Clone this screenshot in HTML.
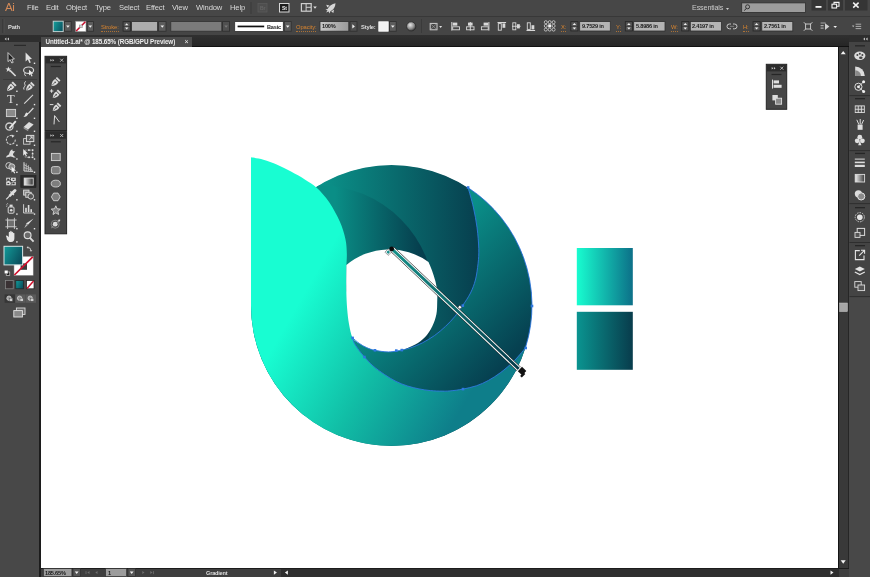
<!DOCTYPE html>
<html>
<head>
<meta charset="utf-8">
<title>Untitled-1.ai</title>
<style>
html,body{margin:0;padding:0;}
body{width:870px;height:577px;overflow:hidden;background:#464646;font-family:"Liberation Sans",sans-serif;position:relative;}
.abs{position:absolute;}
.mi,.lbl,.olbl,.ft,.tx,#tab{will-change:transform;}
#menubar{left:0;top:0;width:870px;height:16px;background:#474747;}
#ctrlbar{left:0;top:16px;width:870px;height:18.5px;background:#454545;border-top:1px solid #383838;box-sizing:border-box;}
#tabbar{left:0;top:34.5px;width:870px;height:12.5px;background:linear-gradient(#303030,#262626);border-bottom:1px solid #111;box-sizing:border-box;}
#tab{left:41px;top:36.5px;width:151px;height:10px;background:#4c4c4c;color:#ececec;font-size:6.3px;font-weight:bold;line-height:10.5px;white-space:nowrap;}
#canvas{left:41px;top:47px;width:797px;height:520.5px;background:#ffffff;}
#tools{left:0;top:42px;width:41px;height:535px;background:#484848;border-right:2px solid #1c1c1c;box-sizing:border-box;}
#vscroll{left:838px;top:47px;width:11px;height:520.5px;background:#393939;border-left:1.6px solid #141414;border-right:1.8px solid #262626;box-sizing:border-box;}
#rightpanel{left:849px;top:42px;width:21px;height:535px;background:#484848;}
#statusbar{left:41px;top:567.5px;width:808px;height:9.5px;background:#3e3e3e;border-top:1px solid #1c1c1c;box-sizing:border-box;}
#hscroll{left:281px;top:568.5px;width:557.5px;height:8.5px;background:#2f2f2f;}
.mi{position:absolute;top:2.5px;color:#dadada;font-size:7.6px;line-height:10px;white-space:nowrap;letter-spacing:-0.15px;}
.lbl{position:absolute;color:#dedede;font-size:5.8px;line-height:8px;white-space:nowrap;font-weight:bold;letter-spacing:-0.2px;}
.olbl{position:absolute;color:#d9852f;font-size:5.8px;line-height:8px;white-space:nowrap;border-bottom:0.5px dotted rgba(217,133,47,0.7);letter-spacing:-0.1px;}
.ft{position:absolute;color:#1a1a1a;font-size:5.6px;line-height:8px;white-space:nowrap;font-weight:bold;letter-spacing:-0.2px;}
</style>
</head>
<body>
<div id="menubar" class="abs"></div>
<div id="ctrlbar" class="abs"></div>
<div id="tabbar" class="abs"></div>
<div id="tab" class="abs"><span style="position:absolute;left:4.5px;letter-spacing:-0.1px;">Untitled-1.ai* @ 185.65% (RGB/GPU Preview)</span><span style="position:absolute;left:143.5px;font-weight:normal;font-size:7px;">×</span></div>
<div id="canvas" class="abs"></div>
<div id="tools" class="abs"></div>
<div id="vscroll" class="abs"></div>
<div id="rightpanel" class="abs"></div>
<div id="statusbar" class="abs"></div>
<div id="hscroll" class="abs"></div>

<!-- ICONS -->
<svg class="abs" style="left:0;top:0;" width="870" height="577" viewBox="0 0 870 577">
<rect x="250.5" y="2" width="1" height="12" fill="#3a3a3a"/>
<rect x="258" y="3.5" width="9" height="8.5" fill="#4e4e4e" stroke="#5a5a5a" stroke-width="0.8"/>
<rect x="279.5" y="3.5" width="9.5" height="8.5" fill="#1e1e1e" stroke="#d8d8d8" stroke-width="1"/>
<rect x="300.8" y="3" width="11" height="8.8" fill="#cfcfcf"/>
<rect x="302" y="4.2" width="3.6" height="6.4" fill="#4a4a4a"/><rect x="306.6" y="4.2" width="4" height="2.6" fill="#4a4a4a"/><rect x="306.6" y="7.8" width="4" height="2.8" fill="#4a4a4a"/>
<path d="M313.2,6.5 h3.6 l-1.8,2.2 z" fill="#e0e0e0"/>
<path d="M335.5,3.2 C332,3.6 329,6 327.6,9 L325.5,9.4 L327.5,10.6 L326,12.6 L328.6,11.6 L329.6,13.4 L330.4,11.2 C333.2,10 335.4,7 335.5,3.2 Z" fill="#d6d6d6"/>
<path d="M326.2,4.8 L329.6,5.4 L327.4,7.6 Z M334,9.6 L333.4,13 L331.2,11.4 Z" fill="#d6d6d6"/>
<path d="M726.0,8.0 h3 l-1.5,2 z" fill="#cfcfcf"/>
<rect x="741.7" y="2.9" width="63.8" height="9.5" fill="#9c9c9c" stroke="#2f2f2f" stroke-width="0.8"/>
<circle cx="747.6" cy="6.8" r="2" fill="none" stroke="#2a2a2a" stroke-width="0.9"/><line x1="746.2" y1="8.4" x2="744.4" y2="10.6" stroke="#2a2a2a" stroke-width="1"/>
<rect x="811.5" y="0" width="14.5" height="10.5" fill="#353535"/><rect x="828" y="0" width="15" height="10.5" fill="#353535"/><rect x="845" y="0" width="22.5" height="10.5" fill="#353535"/>
<rect x="815.5" y="6" width="6" height="1.8" fill="#f4f4f4"/>
<rect x="832" y="4.2" width="4.6" height="3.8" fill="none" stroke="#f4f4f4" stroke-width="1.1"/><path d="M834,4 V2.4 H839 V6.2 H837" fill="none" stroke="#f4f4f4" stroke-width="1.1"/>
<path d="M853.2,2.6 L858.6,7.6 M858.6,2.6 L853.2,7.6" stroke="#f4f4f4" stroke-width="1.5"/>
<rect x="2.6" y="19" width="1" height="14" fill="#2f2f2f"/><rect x="3.6" y="19" width="0.6" height="14" fill="#5a5a5a"/>
<defs><linearGradient id="gsw" x1="0" y1="0" x2="1" y2="0.4"><stop offset="0" stop-color="#17a39f"/><stop offset="1" stop-color="#0b5a66"/></linearGradient></defs>
<rect x="53.2" y="21.2" width="10" height="10.4" fill="url(#gsw)" stroke="#c8d8d8" stroke-width="0.9"/>
<rect x="64.6" y="21.6" width="6.6" height="9.6" fill="#5c5c5c" stroke="#2e2e2e" stroke-width="0.8"/><path d="M66.1,25.6 h3.6 l-1.8,2.2 z" fill="#f0f0f0"/>
<rect x="75.6" y="21.2" width="10.4" height="10.4" fill="#ffffff" stroke="#888" stroke-width="0.6"/><line x1="76.2" y1="31" x2="85.4" y2="21.8" stroke="#c8102e" stroke-width="1.6"/><rect x="79.4" y="25" width="2.8" height="2.8" fill="#d0d0d0" stroke="#777" stroke-width="0.4"/>
<rect x="87.2" y="21.6" width="6.2" height="9.6" fill="#5c5c5c" stroke="#2e2e2e" stroke-width="0.8"/><path d="M88.5,25.6 h3.6 l-1.8,2.2 z" fill="#f0f0f0"/>
<rect x="123" y="21.6" width="7.4" height="9.6" fill="#333" stroke="#2a2a2a" stroke-width="0.8"/><rect x="123.6" y="22.200000000000003" width="6.2" height="3.9" fill="#565656"/><rect x="123.6" y="26.7" width="6.2" height="3.9" fill="#565656"/><path d="M125.0,25.2 h3.4 l-1.7,-2 z" fill="#f0f0f0"/><path d="M125.0,27.6 h3.4 l-1.7,2 z" fill="#f0f0f0"/>
<rect x="131.6" y="21.6" width="26" height="9.6" fill="#adadad" stroke="#2e2e2e" stroke-width="0.8"/>
<rect x="158.6" y="21.6" width="7.4" height="9.6" fill="#5c5c5c" stroke="#2e2e2e" stroke-width="0.8"/><path d="M160.5,25.6 h3.6 l-1.8,2.2 z" fill="#f0f0f0"/>
<rect x="170.8" y="21.6" width="51" height="9.6" fill="#7b7b7b" stroke="#333" stroke-width="0.8"/>
<rect x="222.6" y="21.6" width="7" height="9.6" fill="#505050" stroke="#2e2e2e" stroke-width="0.8"/><path d="M224.3,25.6 h3.6 l-1.8,2.2 z" fill="#7a7a7a"/>
<rect x="234.7" y="21.6" width="48.6" height="9.8" fill="#ffffff" stroke="#2e2e2e" stroke-width="0.8"/><rect x="237.6" y="25.6" width="26.6" height="1.7" fill="#111"/>
<rect x="284.2" y="21.6" width="7" height="9.6" fill="#5c5c5c" stroke="#2e2e2e" stroke-width="0.8"/><path d="M285.9,25.6 h3.6 l-1.8,2.2 z" fill="#f0f0f0"/>
<defs><linearGradient id="gop" x1="0" y1="0" x2="1" y2="0"><stop offset="0" stop-color="#c6c6c6"/><stop offset="1" stop-color="#9a9a9a"/></linearGradient></defs>
<rect x="320" y="21.6" width="28.8" height="9.6" fill="url(#gop)" stroke="#2e2e2e" stroke-width="0.8"/>
<rect x="350" y="21.6" width="7" height="9.6" fill="#4e4e4e" stroke="#2e2e2e" stroke-width="0.8"/><path d="M352.3,24.3 v4.2 l2.6,-2.1 z" fill="#f0f0f0"/>
<rect x="378.8" y="21.8" width="9.4" height="9.4" fill="#f2f2f2" stroke="#fff" stroke-width="0.8"/>
<rect x="389.4" y="21.6" width="6.8" height="9.6" fill="#5c5c5c" stroke="#2e2e2e" stroke-width="0.8"/><path d="M391.0,25.6 h3.6 l-1.8,2.2 z" fill="#f0f0f0"/>
<defs><radialGradient id="gsp" cx="0.4" cy="0.35" r="0.7"><stop offset="0" stop-color="#e8e8e8"/><stop offset="0.6" stop-color="#8a8a8a"/><stop offset="1" stop-color="#2a2a2a"/></radialGradient></defs>
<circle cx="411.2" cy="26.4" r="4.6" fill="url(#gsp)" stroke="#2c2c2c" stroke-width="0.8"/>
<rect x="421" y="19" width="0.8" height="14" fill="#383838"/>
<rect x="430.2" y="23.4" width="6.8" height="6.4" fill="none" stroke="#cfcfcf" stroke-width="1"/><path d="M430.6,23.8 L436.6,29.4 M436.6,23.8 L430.6,29.4" stroke="#9a9a9a" stroke-width="0.7"/><path d="M439.1,26.1 h3 l-1.5,1.8 z" fill="#e0e0e0"/>
<rect x="451.3" y="22" width="1" height="8.6" fill="#d8d8d8"/><rect x="452.7" y="22.6" width="4.6" height="3" fill="#d8d8d8"/><rect x="452.7" y="26.8" width="6.8" height="3" fill="none" stroke="#d8d8d8" stroke-width="0.9"/>
<rect x="469.8" y="22" width="1" height="8.6" fill="#d8d8d8"/><rect x="468" y="22.6" width="4.6" height="3" fill="#d8d8d8"/><rect x="466.6" y="26.8" width="7.4" height="3" fill="none" stroke="#d8d8d8" stroke-width="0.9"/>
<rect x="488.4" y="22" width="1" height="8.6" fill="#d8d8d8"/><rect x="483.6" y="22.6" width="4.6" height="3" fill="#d8d8d8"/><rect x="481.4" y="26.8" width="6.8" height="3" fill="none" stroke="#d8d8d8" stroke-width="0.9"/>
<rect x="497.5" y="22" width="8.6" height="1" fill="#d8d8d8"/><rect x="498.3" y="23.6" width="3" height="6.6" fill="none" stroke="#d8d8d8" stroke-width="0.9"/><rect x="502.5" y="23.4" width="2.8" height="4.4" fill="#d8d8d8"/>
<rect x="512" y="25.8" width="8.6" height="0.9" fill="#d8d8d8"/><rect x="512.8" y="22.8" width="3" height="7" fill="none" stroke="#d8d8d8" stroke-width="0.9"/><rect x="517" y="24.2" width="2.8" height="4.2" fill="#d8d8d8"/>
<rect x="526.5" y="30" width="8.6" height="1" fill="#d8d8d8"/><rect x="527.3" y="22.8" width="3" height="6.6" fill="none" stroke="#d8d8d8" stroke-width="0.9"/><rect x="531.5" y="25.2" width="2.8" height="4.2" fill="#d8d8d8"/>
<circle cx="545.8" cy="22.2" r="1.5" fill="#3a3a3a" stroke="#d8d8d8" stroke-width="0.8"/>
<circle cx="545.8" cy="25.9" r="1.5" fill="#3a3a3a" stroke="#d8d8d8" stroke-width="0.8"/>
<circle cx="545.8" cy="29.6" r="1.5" fill="#3a3a3a" stroke="#d8d8d8" stroke-width="0.8"/>
<circle cx="549.7" cy="22.2" r="1.5" fill="#3a3a3a" stroke="#d8d8d8" stroke-width="0.8"/>
<rect x="548.2" y="24.4" width="3" height="3" fill="#f4f4f4"/>
<circle cx="549.7" cy="29.6" r="1.5" fill="#3a3a3a" stroke="#d8d8d8" stroke-width="0.8"/>
<circle cx="553.6" cy="22.2" r="1.5" fill="#3a3a3a" stroke="#d8d8d8" stroke-width="0.8"/>
<circle cx="553.6" cy="25.9" r="1.5" fill="#3a3a3a" stroke="#d8d8d8" stroke-width="0.8"/>
<circle cx="553.6" cy="29.6" r="1.5" fill="#3a3a3a" stroke="#d8d8d8" stroke-width="0.8"/>
<rect x="570.8" y="21.6" width="7.2" height="9.4" fill="#333" stroke="#2a2a2a" stroke-width="0.8"/><rect x="571.4" y="22.200000000000003" width="6.0" height="3.8" fill="#565656"/><rect x="571.4" y="26.6" width="6.0" height="3.8" fill="#565656"/><path d="M572.7,25.1 h3.4 l-1.7,-2 z" fill="#f0f0f0"/><path d="M572.7,27.5 h3.4 l-1.7,2 z" fill="#f0f0f0"/>
<rect x="579.7" y="21.6" width="30.6" height="9.4" fill="#b4b4b4" stroke="#2e2e2e" stroke-width="0.8"/>
<rect x="625.3" y="21.6" width="7.2" height="9.4" fill="#333" stroke="#2a2a2a" stroke-width="0.8"/><rect x="625.9" y="22.200000000000003" width="6.0" height="3.8" fill="#565656"/><rect x="625.9" y="26.6" width="6.0" height="3.8" fill="#565656"/><path d="M627.2,25.1 h3.4 l-1.7,-2 z" fill="#f0f0f0"/><path d="M627.2,27.5 h3.4 l-1.7,2 z" fill="#f0f0f0"/>
<rect x="633.7" y="21.6" width="31.3" height="9.4" fill="#b4b4b4" stroke="#2e2e2e" stroke-width="0.8"/>
<rect x="681.7" y="21.6" width="7.2" height="9.4" fill="#333" stroke="#2a2a2a" stroke-width="0.8"/><rect x="682.3000000000001" y="22.200000000000003" width="6.0" height="3.8" fill="#565656"/><rect x="682.3000000000001" y="26.6" width="6.0" height="3.8" fill="#565656"/><path d="M683.6,25.1 h3.4 l-1.7,-2 z" fill="#f0f0f0"/><path d="M683.6,27.5 h3.4 l-1.7,2 z" fill="#f0f0f0"/>
<rect x="690.3" y="21.6" width="31.2" height="9.4" fill="#b4b4b4" stroke="#2e2e2e" stroke-width="0.8"/>
<rect x="753" y="21.6" width="7.2" height="9.4" fill="#333" stroke="#2a2a2a" stroke-width="0.8"/><rect x="753.6" y="22.200000000000003" width="6.0" height="3.8" fill="#565656"/><rect x="753.6" y="26.6" width="6.0" height="3.8" fill="#565656"/><path d="M754.9,25.1 h3.4 l-1.7,-2 z" fill="#f0f0f0"/><path d="M754.9,27.5 h3.4 l-1.7,2 z" fill="#f0f0f0"/>
<rect x="761.8" y="21.6" width="31" height="9.4" fill="#b4b4b4" stroke="#2e2e2e" stroke-width="0.8"/>
<path d="M731,24 h-1.6 a2.4,2.4 0 0 0 0,4.8 h1.6 M733,24 h1.6 a2.4,2.4 0 0 1 0,4.8 h-1.6" fill="none" stroke="#c8c8c8" stroke-width="1"/><path d="M730,26.4 h4" stroke="#8a8a8a" stroke-width="0.8"/>
<rect x="805.6" y="24" width="5" height="5" fill="none" stroke="#cfcfcf" stroke-width="0.9"/><path d="M803.8,22.2 l2,2 M812.4,22.2 l-2,2 M803.8,30.8 l2,-2 M812.4,30.8 l-2,-2" stroke="#cfcfcf" stroke-width="0.9"/>
<path d="M820.6,23 h5 M820.6,25.6 h3 M820.6,28.2 h3" stroke="#a8a8a8" stroke-width="1.2"/><path d="M825,23.2 L829.4,26.6 L825,30 Z" fill="#cfcfcf"/><path d="M833.4,25.9 h3.6 l-1.8,2.2 z" fill="#f0f0f0"/>
<path d="M855.6,24.2 h5.6 M855.6,26.4 h5.6 M855.6,28.6 h5.6" stroke="#b8b8b8" stroke-width="0.9"/><path d="M852.0,25.6 h2.4 l-1.2,1.6 z" fill="#b8b8b8"/>
<rect x="0" y="35.5" width="40" height="6.5" fill="#2e2e2e"/>
<path d="M6.4,37.6 L4.6,39 L6.4,40.4 Z M9,37.6 L7.2,39 L9,40.4 Z" fill="#c8c8c8"/>
<rect x="14" y="44.8" width="12" height="1.2" fill="#2a2a2a"/>
<rect x="3" y="79" width="34" height="0.8" fill="#3a3a3a"/>
<rect x="20.8" y="175.6" width="15.2" height="11.8" fill="#2b2b2b" stroke="#222" stroke-width="0.6"/>
<path d="M8,52.6 L8,61.6 L10.2,59.6 L11.8,63 L13.2,62.4 L11.8,59.2 L14.4,59 Z" fill="#1e1e1e" stroke="#d8d8d8" stroke-width="0.9"/>
<path d="M25.6,52.6 L25.6,61.6 L27.8,59.6 L29.400000000000002,63 L30.8,62.4 L29.400000000000002,59.2 L32.0,59 Z" fill="#e0e0e0"/><rect x="33.8" y="62.6" width="1.4" height="1.4" fill="#e8e8e8"/>
<path d="M10,70.4 L15.6,76.0" stroke="#d8d8d8" stroke-width="1.6"/><path d="M8.4,66.4 l0.8,2 l2.2,0.2 l-1.8,1.2 l0.6,2.2 l-1.8,-1.4 l-1.8,1.4 l0.6,-2.2 l-1.8,-1.2 l2.2,-0.2 z" fill="#e0e0e0"/>
<ellipse cx="28.6" cy="70.2" rx="5" ry="3.2" fill="none" stroke="#d8d8d8" stroke-width="1.2"/><path d="M25.200000000000003,72.4 q-1.6,2 0.6,3.8" fill="none" stroke="#d8d8d8" stroke-width="1"/><path d="M29.0,69.80000000000001 l0,5.8 l1.4,-1.4 l1.2,2.4 l1,-0.6 l-1.2,-2.2 l2,-0.2 z" fill="#e8e8e8"/>
<g transform="translate(11.6,86.4) scale(1.0) rotate(225)"><path d="M0,-6.4 C2.6,-3.6 3.2,-1 2.4,1.6 L-2.4,1.6 C-3.2,-1 -2.6,-3.6 0,-6.4 Z" fill="#dcdcdc"/><path d="M0,-5.6 L0,-1.6" stroke="#3a3a3a" stroke-width="0.7"/><circle cx="0" cy="-1" r="0.8" fill="#3a3a3a"/><rect x="-2.6" y="2.4" width="5.2" height="2" fill="#dcdcdc"/></g><rect x="16.2" y="90.6" width="1.4" height="1.4" fill="#e8e8e8"/>
<g transform="translate(30.200000000000003,86.4) scale(0.92) rotate(225)"><path d="M0,-6.4 C2.6,-3.6 3.2,-1 2.4,1.6 L-2.4,1.6 C-3.2,-1 -2.6,-3.6 0,-6.4 Z" fill="#dcdcdc"/><path d="M0,-5.6 L0,-1.6" stroke="#3a3a3a" stroke-width="0.7"/><circle cx="0" cy="-1" r="0.8" fill="#3a3a3a"/><rect x="-2.6" y="2.4" width="5.2" height="2" fill="#dcdcdc"/></g><path d="M24.0,89.6 c-1.6,-2.6 2.4,-3 0.8,-5.4 c-0.8,-1.4 0.2,-2.4 1.2,-2.8" fill="none" stroke="#d8d8d8" stroke-width="1"/>
<path d="M33.0,94.89999999999999 L24.200000000000003,103.7" stroke="#d8d8d8" stroke-width="1.1"/><rect x="33.8" y="103.9" width="1.4" height="1.4" fill="#e8e8e8"/>
<rect x="16.2" y="103.9" width="1.4" height="1.4" fill="#e8e8e8"/>
<rect x="6.4" y="109.4" width="9.2" height="7.2" fill="#8a8a8a" stroke="#d4d4d4" stroke-width="0.9"/><rect x="16.2" y="117.6" width="1.4" height="1.4" fill="#e8e8e8"/>
<path d="M33.4,108 L28.200000000000003,113.6" stroke="#d8d8d8" stroke-width="1.3"/><path d="M28.400000000000002,113.2 c-0.6,2.8 -2.6,3.8 -5,3.8 c1.6,-0.8 1.4,-3 2.8,-4.4 z" fill="#e0e0e0"/><rect x="33.8" y="117.6" width="1.4" height="1.4" fill="#e8e8e8"/>
<circle cx="9.4" cy="126.6" r="3.6" fill="none" stroke="#cfcfcf" stroke-width="1.3"/><path d="M15.8,121.2 L9.4,128.4" stroke="#e8e8e8" stroke-width="1.8"/><rect x="16.2" y="130.6" width="1.4" height="1.4" fill="#e8e8e8"/>
<path d="M23.6,127 l5.4,-5 l4.6,2.4 l-5.4,5.2 z" fill="#dcdcdc"/><path d="M23.6,127 l4.6,2.6 l0,1.6 l-4.6,-2.6 z" fill="#9a9a9a"/><rect x="33.8" y="130.6" width="1.4" height="1.4" fill="#e8e8e8"/>
<path d="M15.2,139.6 a4.4,4.4 0 1 1 -2.4,-3.6" fill="none" stroke="#cfcfcf" stroke-width="1.1" stroke-dasharray="2.2,1"/><path d="M11.6,134.4 l3,1.4 l-2.4,2 z" fill="#d8d8d8"/><rect x="16.2" y="144.6" width="1.4" height="1.4" fill="#e8e8e8"/>
<rect x="23.6" y="138.6" width="6.4" height="5.6" fill="none" stroke="#cfcfcf" stroke-width="0.9"/><rect x="26.400000000000002" y="135.4" width="7.4" height="6.2" fill="#5a5a5a" stroke="#dcdcdc" stroke-width="1"/><path d="M29.200000000000003,139.6 l3,-2.8 m0,2 l0,-2 l-2,0" stroke="#e8e8e8" stroke-width="0.8" fill="none"/><rect x="33.8" y="144.6" width="1.4" height="1.4" fill="#e8e8e8"/>
<path d="M6,157.5 c1.2,-3.4 2.4,-1 3.4,-4.4 c0.6,-2.4 1.8,-3.4 3,-3.8 c-0.4,2 1.2,2.4 2.8,1.6 c-0.8,1.8 -2.4,2 -2.2,3.8 c0.2,1.4 1.8,1.6 2.8,2.6 c-2,0.8 -3.6,-0.6 -5,-0.8 c-1.6,-0.2 -2.6,1 -4.8,1 z" fill="#dcdcdc"/><rect x="16.2" y="158.3" width="1.4" height="1.4" fill="#e8e8e8"/>
<rect x="25.200000000000003" y="150.1" width="7.4" height="7.2" fill="none" stroke="#bdbdbd" stroke-width="0.8" stroke-dasharray="1.4,1"/><path d="M23.200000000000003,149.1 l0,6.6 l1.6,-1.6 l1.2,2.4 l1,-0.5 l-1.2,-2.3 l2.2,-0.2 z" fill="#e8e8e8"/><rect x="31.8" y="149.29999999999998" width="1.6" height="1.6" fill="#e8e8e8"/><rect x="31.8" y="156.49999999999997" width="1.6" height="1.6" fill="#e8e8e8"/><rect x="31.8" y="152.89999999999998" width="1.6" height="1.6" fill="#e8e8e8"/><rect x="28.2" y="156.49999999999997" width="1.6" height="1.6" fill="#e8e8e8"/><rect x="28.2" y="149.29999999999998" width="1.6" height="1.6" fill="#e8e8e8"/><rect x="33.8" y="158.3" width="1.4" height="1.4" fill="#e8e8e8"/>
<circle cx="8.8" cy="165.6" r="3" fill="none" stroke="#cfcfcf" stroke-width="1"/><circle cx="11.8" cy="166.8" r="3" fill="#8a8a8a" stroke="#cfcfcf" stroke-width="1"/><path d="M11.6,166.8 l0,5.8 l1.4,-1.4 l1.2,2.2 l1,-0.5 l-1.2,-2.2 l2,-0.2 z" fill="#f0f0f0"/><rect x="16.2" y="171.6" width="1.4" height="1.4" fill="#e8e8e8"/>
<path d="M24.0,162.2 L24.0,171 L33.2,171.4" fill="none" stroke="#dcdcdc" stroke-width="1"/><path d="M26.200000000000003,163.4 V171 M28.400000000000002,165.2 V171 M30.6,167 V171.2 M24.0,164.6 L32.2,169.6 M24.0,167.6 L32.6,170.4" stroke="#c8c8c8" stroke-width="0.8" fill="none"/><rect x="33.8" y="171.6" width="1.4" height="1.4" fill="#e8e8e8"/>
<rect x="6.2" y="177.7" width="9.6" height="7.6" fill="#dcdcdc"/><path d="M6.2,181.1 q2.4,-1.4 4.8,0.2 t4.8,0 M10.8,177.7 q-1.2,2 0,3.8 t0,3.8" stroke="#2e2e2e" stroke-width="0.9" fill="none"/><rect x="7.2" y="178.7" width="2" height="1.4" fill="#3a3a3a"/><rect x="12.4" y="182.9" width="2.2" height="1.4" fill="#3a3a3a"/><rect x="12.6" y="178.7" width="1.8" height="1.2" fill="#3a3a3a"/><rect x="7.4" y="182.9" width="1.8" height="1.2" fill="#3a3a3a"/>
<defs><linearGradient id="ggt" x1="0" y1="0" x2="1" y2="0"><stop offset="0" stop-color="#f4f4f4"/><stop offset="1" stop-color="#2a2a2a"/></linearGradient></defs><rect x="24.200000000000003" y="178.1" width="9" height="7" fill="url(#ggt)" stroke="#e0e0e0" stroke-width="0.9"/>
<path d="M6.2,199.3 L10.4,195.1" stroke="#e0e0e0" stroke-width="1.2"/><path d="M9.4,196.1 L12.8,192.7" stroke="#e0e0e0" stroke-width="2.6"/><path d="M10.4,191.5 L14,195.1" stroke="#e0e0e0" stroke-width="1.2"/><path d="M12.6,192.9 L15,190.5" stroke="#e0e0e0" stroke-width="3" stroke-linecap="round"/><rect x="16.2" y="199.1" width="1.4" height="1.4" fill="#e8e8e8"/>
<rect x="23.6" y="190.1" width="5.4" height="5" fill="#8a8a8a" stroke="#dcdcdc" stroke-width="0.9"/><rect x="25.8" y="192.3" width="5.4" height="5" fill="#6a6a6a" stroke="#dcdcdc" stroke-width="0.9"/><circle cx="30.8" cy="196.3" r="2.8" fill="#555" stroke="#dcdcdc" stroke-width="0.9"/><rect x="33.8" y="199.1" width="1.4" height="1.4" fill="#e8e8e8"/>
<rect x="8.2" y="207.0" width="5.8" height="6.2" rx="1" fill="none" stroke="#dcdcdc" stroke-width="1"/><rect x="9.6" y="204.60000000000002" width="3" height="2.2" fill="#dcdcdc"/><circle cx="11.2" cy="210.20000000000002" r="1.3" fill="#dcdcdc"/><path d="M6.4,204.4 l1,0.6 M6,206.20000000000002 l1.2,0 M7.4,203.20000000000002 l0.6,1" stroke="#dcdcdc" stroke-width="0.7"/><rect x="16.2" y="213.4" width="1.4" height="1.4" fill="#e8e8e8"/>
<path d="M23.6,204.20000000000002 V213.0 H33.800000000000004" fill="none" stroke="#dcdcdc" stroke-width="0.9"/><rect x="25.200000000000003" y="207.8" width="1.6" height="4.4" fill="#dcdcdc"/><rect x="27.8" y="205.0" width="1.6" height="7.2" fill="#dcdcdc"/><rect x="30.400000000000002" y="209.20000000000002" width="1.6" height="3" fill="#dcdcdc"/><rect x="33.8" y="213.4" width="1.4" height="1.4" fill="#e8e8e8"/>
<rect x="7.6" y="220.0" width="6.8" height="6.8" fill="#6e6e6e" stroke="#dcdcdc" stroke-width="0.9"/><path d="M5.4,220.0 h2 M14.6,220.0 h2 M5.4,226.8 h2 M14.6,226.8 h2 M7.6,217.8 v2 M14.4,217.8 v2 M7.6,227.0 v2 M14.4,227.0 v2" stroke="#dcdcdc" stroke-width="0.8"/><rect x="16.2" y="228.0" width="1.4" height="1.4" fill="#e8e8e8"/>
<path d="M33.6,218.4 L28.0,224.8 L26.0,223.6 Z" fill="#e0e0e0"/><path d="M26.200000000000003,224.0 l1.6,1 l-3.6,3.2 z" fill="#bdbdbd"/><rect x="33.8" y="228.0" width="1.4" height="1.4" fill="#e8e8e8"/>
<path d="M6.4,237.0 c-1,-1.4 0.4,-2.2 1.4,-1 l1,1.2 v-4.8 c0,-1 1.4,-1 1.4,0 v-1 c0,-1 1.4,-1 1.4,0 v1 c0,-1 1.4,-1 1.4,0 v1.2 c0,-1 1.4,-1 1.4,0 v4.6 c0,2 -1,3.8 -3.4,3.8 c-2.2,0 -3,-1 -4,-2.6 z" fill="#e4e4e4"/><rect x="16.2" y="241.2" width="1.4" height="1.4" fill="#e8e8e8"/>
<circle cx="27.6" cy="235.2" r="3.4" fill="#6a6a6a" stroke="#dcdcdc" stroke-width="1.2"/><path d="M30.0,237.79999999999998 L33.6,241.6" stroke="#dcdcdc" stroke-width="1.8"/>
<rect x="14" y="256.4" width="19.2" height="19" fill="#ffffff" stroke="#8a8a8a" stroke-width="0.5"/><rect x="20.6" y="263.4" width="6.4" height="6.4" fill="#3c3c3c"/><path d="M14.4,275 L32.8,256.8" stroke="#d0102c" stroke-width="1.7"/>
<defs><linearGradient id="gfs" x1="0" y1="0" x2="1" y2="0.5"><stop offset="0" stop-color="#139c9a"/><stop offset="1" stop-color="#0a5360"/></linearGradient></defs>
<rect x="4" y="246.3" width="18.6" height="18.6" fill="url(#gfs)" stroke="#d4e4e4" stroke-width="1"/>
<path d="M27.6,247.4 q3.4,0 3.4,3.4" fill="none" stroke="#cfcfcf" stroke-width="0.9"/><path d="M28.2,246 l-1.6,1.4 l1.6,1.4 z M29.6,250.2 l1.4,1.6 l1.4,-1.6 z" fill="#cfcfcf"/>
<rect x="6.2" y="272" width="3.6" height="3.6" fill="#222" stroke="#e8e8e8" stroke-width="0.6"/><rect x="4.4" y="270.2" width="3.6" height="3.6" fill="#ffffff" stroke="#444" stroke-width="0.4"/>
<rect x="5.6" y="280.6" width="7.6" height="8.2" fill="#3a3234" stroke="#8a8a8a" stroke-width="0.7"/>
<rect x="15.8" y="280.6" width="7.6" height="8.2" fill="url(#gfs)" stroke="#222" stroke-width="0.7"/>
<rect x="26.6" y="280.6" width="7.4" height="8.2" fill="#ffffff" stroke="#222" stroke-width="0.7"/><path d="M27,288.4 L33.6,281" stroke="#d0102c" stroke-width="1.5"/>
<rect x="4.6" y="294.4" width="10.4" height="8.4" fill="#363636"/><rect x="15.4" y="294.4" width="10.2" height="8.4" fill="#5a5a5a"/><rect x="26" y="294.4" width="10" height="8.4" fill="#5a5a5a"/>
<circle cx="9.0" cy="298.2" r="2.2" fill="#9a9a9a" stroke="#dcdcdc" stroke-width="0.7"/><rect x="9.4" y="298.2" width="3.2" height="3" fill="#cfcfcf" stroke="#444" stroke-width="0.4"/>
<circle cx="19.599999999999998" cy="298.2" r="2.2" fill="#9a9a9a" stroke="#dcdcdc" stroke-width="0.7"/><rect x="20.0" y="298.2" width="3.2" height="3" fill="#cfcfcf" stroke="#444" stroke-width="0.4"/>
<circle cx="30.2" cy="298.2" r="2.2" fill="#9a9a9a" stroke="#dcdcdc" stroke-width="0.7"/><rect x="30.6" y="298.2" width="3.2" height="3" fill="#cfcfcf" stroke="#444" stroke-width="0.4"/>
<rect x="16.4" y="308" width="8.6" height="6.4" fill="#6a6a6a" stroke="#dcdcdc" stroke-width="0.9"/><rect x="13.8" y="310.6" width="8.6" height="6.4" fill="#8a8a8a" stroke="#e4e4e4" stroke-width="0.9"/>
<rect x="45" y="56.3" width="21.6" height="74.2" fill="#464646" stroke="#262626" stroke-width="1"/><rect x="45.5" y="56.8" width="20.6" height="6.6" fill="#2c2c2c"/><path d="M50.4,58.9 l1.6,1.3 l-1.6,1.3 z M52.6,58.9 l1.6,1.3 l-1.6,1.3 z" fill="#cfcfcf"/><path d="M60.199999999999996,58.699999999999996 l3,3 m0,-3 l-3,3" stroke="#cfcfcf" stroke-width="0.8"/><rect x="50.8" y="65.89999999999999" width="10" height="1.2" fill="#262626"/>
<g transform="translate(55.8,81.6) scale(0.95) rotate(225)"><path d="M0,-6.4 C2.6,-3.6 3.2,-1 2.4,1.6 L-2.4,1.6 C-3.2,-1 -2.6,-3.6 0,-6.4 Z" fill="#dcdcdc"/><path d="M0,-5.6 L0,-1.6" stroke="#3a3a3a" stroke-width="0.7"/><circle cx="0" cy="-1" r="0.8" fill="#3a3a3a"/><rect x="-2.6" y="2.4" width="5.2" height="2" fill="#dcdcdc"/></g>
<g transform="translate(56.8,94) scale(0.9) rotate(225)"><path d="M0,-6.4 C2.6,-3.6 3.2,-1 2.4,1.6 L-2.4,1.6 C-3.2,-1 -2.6,-3.6 0,-6.4 Z" fill="#dcdcdc"/><path d="M0,-5.6 L0,-1.6" stroke="#3a3a3a" stroke-width="0.7"/><circle cx="0" cy="-1" r="0.8" fill="#3a3a3a"/><rect x="-2.6" y="2.4" width="5.2" height="2" fill="#dcdcdc"/></g><path d="M49.8,91 h3.6 M51.599999999999994,89.2 v3.6" stroke="#e0e0e0" stroke-width="1"/>
<g transform="translate(56.8,107) scale(0.9) rotate(225)"><path d="M0,-6.4 C2.6,-3.6 3.2,-1 2.4,1.6 L-2.4,1.6 C-3.2,-1 -2.6,-3.6 0,-6.4 Z" fill="#dcdcdc"/><path d="M0,-5.6 L0,-1.6" stroke="#3a3a3a" stroke-width="0.7"/><circle cx="0" cy="-1" r="0.8" fill="#3a3a3a"/><rect x="-2.6" y="2.4" width="5.2" height="2" fill="#dcdcdc"/></g><path d="M49.8,104.6 h3.6" stroke="#e0e0e0" stroke-width="1"/>
<path d="M54.0,124.4 L54.599999999999994,115.6 L59.4,122" fill="none" stroke="#dcdcdc" stroke-width="1"/>
<rect x="45" y="131.6" width="21.6" height="102.2" fill="#464646" stroke="#262626" stroke-width="1"/><rect x="45.5" y="132.1" width="20.6" height="6.6" fill="#2c2c2c"/><path d="M50.4,134.2 l1.6,1.3 l-1.6,1.3 z M52.6,134.2 l1.6,1.3 l-1.6,1.3 z" fill="#cfcfcf"/><path d="M60.199999999999996,134.0 l3,3 m0,-3 l-3,3" stroke="#cfcfcf" stroke-width="0.8"/><rect x="50.8" y="141.2" width="10" height="1.2" fill="#262626"/>
<rect x="51.4" y="153.4" width="8.8" height="7.2" fill="#7e7e7e" stroke="#d4d4d4" stroke-width="0.9"/>
<rect x="51.4" y="166.6" width="8.8" height="7.2" rx="2" fill="#7e7e7e" stroke="#d4d4d4" stroke-width="0.9"/>
<ellipse cx="55.8" cy="183.6" rx="4.6" ry="3.4" fill="#7e7e7e" stroke="#d4d4d4" stroke-width="0.9"/>
<polygon points="60.2,196.9 58.0,200.7 53.6,200.7 51.4,196.9 53.6,193.1 58.0,193.1" fill="#7e7e7e" stroke="#d4d4d4" stroke-width="0.9"/>
<polygon points="55.8,205.8 57.1,208.8 60.4,209.1 57.9,211.3 58.6,214.5 55.8,212.8 53.0,214.5 53.7,211.3 51.2,209.1 54.5,208.8" fill="#7e7e7e" stroke="#d4d4d4" stroke-width="0.9"/>
<circle cx="55.199999999999996" cy="224.2" r="2.4" fill="#dcdcdc"/><circle cx="55.199999999999996" cy="224.2" r="4" fill="none" stroke="#9a9a9a" stroke-width="0.7"/><circle cx="59.199999999999996" cy="220.4" r="1" fill="#e8e8e8"/><path d="M51.199999999999996,228 L60.199999999999996,219.6" stroke="#bdbdbd" stroke-width="0.6"/>
<rect x="766.3" y="64.3" width="20.4" height="45" fill="#464646" stroke="#262626" stroke-width="1"/><rect x="766.8" y="64.8" width="19.4" height="6.6" fill="#2c2c2c"/><path d="M771.6999999999999,66.89999999999999 l1.6,1.3 l-1.6,1.3 z M773.9,66.89999999999999 l1.6,1.3 l-1.6,1.3 z" fill="#cfcfcf"/><path d="M780.3,66.7 l3,3 m0,-3 l-3,3" stroke="#cfcfcf" stroke-width="0.8"/><rect x="771.5" y="73.89999999999999" width="10" height="1.2" fill="#262626"/>
<rect x="772" y="79.6" width="1" height="9" fill="#e0e0e0"/><rect x="773.6" y="80.4" width="5.4" height="3" fill="#e0e0e0"/><rect x="773.6" y="84.8" width="8" height="3" fill="#e0e0e0"/>
<rect x="772.4" y="95" width="5.4" height="5.4" fill="#dcdcdc"/><rect x="775.6" y="98.2" width="6" height="6" fill="#8a8a8a" stroke="#e0e0e0" stroke-width="0.9"/>
<path d="M840.7,54.3 h5 l-2.5,-3.4 z" fill="#f4f4f4"/>
<rect x="839.6" y="303" width="7.8" height="8.6" fill="#a6a6a6" stroke="#c4c4c4" stroke-width="0.5"/>
<path d="M840.7,560.3 h5 l-2.5,3.4 z" fill="#f4f4f4"/>
<rect x="849" y="35.5" width="21" height="6.5" fill="#2e2e2e"/>
<path d="M865,37.6 L863.2,39 L865,40.4 Z M867.6,37.6 L865.8,39 L867.6,40.4 Z" fill="#c8c8c8"/>
<rect x="849.5" y="42" width="20.5" height="254.5" fill="#444444"/>
<rect x="855" y="45.2" width="10" height="1.3" fill="#262626"/>
<rect x="855" y="98" width="10" height="1.3" fill="#262626"/>
<rect x="855" y="152.8" width="10" height="1.3" fill="#262626"/>
<rect x="855" y="207" width="10" height="1.3" fill="#262626"/>
<rect x="855" y="245" width="10" height="1.3" fill="#262626"/>
<rect x="849.5" y="95.2" width="20.5" height="0.9" fill="#2c2c2c"/>
<rect x="849.5" y="150.2" width="20.5" height="0.9" fill="#2c2c2c"/>
<rect x="849.5" y="203.2" width="20.5" height="0.9" fill="#2c2c2c"/>
<rect x="849.5" y="242" width="20.5" height="0.9" fill="#2c2c2c"/>
<rect x="849.5" y="296.2" width="20.5" height="0.9" fill="#2c2c2c"/>
<ellipse cx="859.8" cy="55.8" rx="5.6" ry="4.2" fill="#dcdcdc"/><circle cx="857.4" cy="55" r="1" fill="#444"/><circle cx="859.8" cy="53.8" r="1" fill="#444"/><circle cx="862.4" cy="55" r="1" fill="#444"/><ellipse cx="860.8" cy="57.8" rx="1.8" ry="1.2" fill="#444"/>
<path d="M855.1999999999999,76 V66.4 A9.6,9.6 0 0 1 864.8,76 Z" fill="#dcdcdc"/><path d="M855.1999999999999,76 V70.2 A5.8,5.8 0 0 1 861.0,76 Z" fill="#8a8a8a"/>
<circle cx="858.4" cy="86.8" r="3.6" fill="none" stroke="#dcdcdc" stroke-width="1"/><path d="M858.4,86.8 L863.4,82 M858.4,86.8 L863.4,91.4" stroke="#dcdcdc" stroke-width="0.9"/><circle cx="863.5999999999999" cy="81.8" r="1.5" fill="#f0f0f0"/><circle cx="863.5999999999999" cy="91.6" r="1.5" fill="#f0f0f0"/><circle cx="858.4" cy="86.8" r="1.4" fill="#f0f0f0"/>
<rect x="854.8" y="105.4" width="10" height="7.6" fill="#dcdcdc"/><rect x="855.6" y="106.4" width="2.2" height="2.4" fill="#555"/><rect x="855.6" y="109.7" width="2.2" height="2.4" fill="#555"/><rect x="858.7" y="106.4" width="2.2" height="2.4" fill="#555"/><rect x="858.7" y="109.7" width="2.2" height="2.4" fill="#555"/><rect x="861.8" y="106.4" width="2.2" height="2.4" fill="#555"/><rect x="861.8" y="109.7" width="2.2" height="2.4" fill="#555"/>
<rect x="857.5999999999999" y="124.6" width="5" height="5.2" fill="#dcdcdc"/><path d="M858.8,124.4 l-2,-4.6 M860.1999999999999,124.4 v-5.4 M861.5999999999999,124.4 l2,-4.4" stroke="#dcdcdc" stroke-width="1"/>
<circle cx="859.8" cy="137.2" r="2.4" fill="#e0e0e0"/><circle cx="857.1999999999999" cy="140.8" r="2.4" fill="#e0e0e0"/><circle cx="862.4" cy="140.8" r="2.4" fill="#e0e0e0"/><path d="M859.8,140 l-1.6,5.2 h3.2 z" fill="#e0e0e0"/>
<rect x="854.8" y="158.6" width="10" height="1" fill="#dcdcdc"/><rect x="854.8" y="161.6" width="10" height="1.6" fill="#dcdcdc"/><rect x="854.8" y="164.8" width="10" height="2.2" fill="#dcdcdc"/>
<defs><linearGradient id="grp" x1="0" y1="0" x2="1" y2="0"><stop offset="0" stop-color="#f0f0f0"/><stop offset="1" stop-color="#3a3a3a"/></linearGradient></defs><rect x="855.1999999999999" y="174.4" width="9.4" height="7.6" fill="url(#grp)" stroke="#dcdcdc" stroke-width="0.9"/>
<circle cx="858.4" cy="193.8" r="3.6" fill="#dcdcdc"/><circle cx="861.1999999999999" cy="196.4" r="3.6" fill="#8a8a8a" stroke="#e4e4e4" stroke-width="1"/>
<circle cx="859.8" cy="217.2" r="4.6" fill="none" stroke="#cfcfcf" stroke-width="0.9" stroke-dasharray="1.6,1"/><circle cx="859.8" cy="217.2" r="2.8" fill="#e4e4e4"/>
<rect x="857.1999999999999" y="228.4" width="7.4" height="7" fill="none" stroke="#dcdcdc" stroke-width="1"/><rect x="855.0" y="232.4" width="5" height="5" fill="#555" stroke="#dcdcdc" stroke-width="0.9"/>
<path d="M859.8,250.6 H855.4 V259.6 H864.0 V255.4" fill="none" stroke="#e4e4e4" stroke-width="1.1"/><path d="M859.1999999999999,255.6 L864.1999999999999,250.6 M861.0,250.2 H864.5999999999999 V253.8" fill="none" stroke="#e4e4e4" stroke-width="1.1"/>
<path d="M859.8,266.4 l5,2.6 l-5,2.6 l-5,-2.6 z" fill="#e4e4e4"/><path d="M854.8,272 l5,2.6 l5,-2.6" fill="none" stroke="#e4e4e4" stroke-width="1.1"/>
<rect x="854.8" y="281.6" width="6.4" height="5.6" fill="none" stroke="#dcdcdc" stroke-width="0.9"/><rect x="858.0" y="285" width="6.6" height="5.6" fill="#555" stroke="#dcdcdc" stroke-width="0.9"/>
<rect x="43.5" y="568.6" width="28.4" height="8" fill="#9c9c9c" stroke="#2a2a2a" stroke-width="0.6"/>
<rect x="73" y="568.6" width="7.4" height="8" fill="#555" stroke="#2a2a2a" stroke-width="0.6"/><path d="M74.8,571.6 h3.8 l-1.9,2.4 z" fill="#f0f0f0"/>
<rect x="105.6" y="568.6" width="21" height="8" fill="#9c9c9c" stroke="#2a2a2a" stroke-width="0.6"/>
<rect x="128" y="568.6" width="7.4" height="8" fill="#555" stroke="#2a2a2a" stroke-width="0.6"/><path d="M129.8,571.6 h3.8 l-1.9,2.4 z" fill="#f0f0f0"/>
<path d="M89.5,571.1 v3 l-2.2,-1.5 z" fill="#6e6e6e"/><rect x="85.6" y="571.1" width="0.8" height="3" fill="#6e6e6e"/><path d="M97.5,571.1 v3 l-2.2,-1.5 z" fill="#6e6e6e"/>
<path d="M142.3,571.1 v3 l2.2,-1.5 z" fill="#6e6e6e"/><path d="M150.3,571.1 v3 l2.2,-1.5 z" fill="#6e6e6e"/><rect x="153.2" y="571.1" width="0.8" height="3" fill="#6e6e6e"/>
<path d="M273.9,570.4 v4.4 l3,-2.2 z" fill="#f0f0f0"/>
<path d="M287.9,570.4 v4.4 l-3,-2.2 z" fill="#f0f0f0"/>
<path d="M830.5,570.4 v4.4 l3,-2.2 z" fill="#f0f0f0"/>
</svg>
<!-- MENU -->
<div class="abs tx" style="left:4.5px;top:0px;color:#d48a58;font-size:11.5px;line-height:15px;letter-spacing:-0.3px;">Ai</div>
<div class="mi" style="left:26.5px;">File</div>
<div class="mi" style="left:45.5px;">Edit</div>
<div class="mi" style="left:66px;">Object</div>
<div class="mi" style="left:95px;">Type</div>
<div class="mi" style="left:118.5px;">Select</div>
<div class="mi" style="left:146px;">Effect</div>
<div class="mi" style="left:172px;">View</div>
<div class="mi" style="left:196px;">Window</div>
<div class="mi" style="left:229.5px;">Help</div>
<div class="mi" style="left:692px;color:#cacaca;font-size:7.2px;">Essentials</div>
<div class="abs tx" style="left:260px;top:4.5px;color:#666;font-size:5px;line-height:7px;font-weight:bold;">Br</div>
<div class="abs tx" style="left:281.5px;top:4.6px;color:#f0f0f0;font-size:5px;line-height:7px;font-weight:bold;">St</div>

<!-- CONTROL BAR TEXT -->
<div class="lbl" style="left:8px;top:22.5px;">Path</div>
<div class="olbl" style="left:101px;top:22.5px;">Stroke:</div>
<div class="ft" style="left:266.5px;top:22.6px;">Basic</div>
<div class="olbl" style="left:296px;top:22.5px;">Opacity:</div>
<div class="ft" style="left:322px;top:22.4px;">100%</div>
<div class="lbl" style="left:361px;top:22.5px;">Style:</div>
<div class="olbl" style="left:561px;top:22.5px;">X:</div>
<div class="ft" style="left:581.5px;top:22.4px;">9.7529 in</div>
<div class="olbl" style="left:615.5px;top:22.5px;">Y:</div>
<div class="ft" style="left:635.5px;top:22.4px;">5.8986 in</div>
<div class="olbl" style="left:670.5px;top:22.5px;">W:</div>
<div class="ft" style="left:692px;top:22.4px;">2.4197 in</div>
<div class="olbl" style="left:743px;top:22.5px;">H:</div>
<div class="ft" style="left:763.5px;top:22.4px;">2.7561 in</div>

<!-- STATUS BAR TEXT -->
<div class="ft" style="left:45px;top:568.8px;font-size:5.6px;">185.65%</div>
<div class="ft" style="left:107.5px;top:568.8px;font-size:5.6px;">1</div>
<div class="lbl" style="left:205.5px;top:568.8px;font-size:5.6px;">Gradient</div>

<!-- ARTWORK -->
<svg class="abs" style="left:0;top:0;" width="870" height="577" viewBox="0 0 870 577">
<defs>
<linearGradient id="gG" gradientUnits="userSpaceOnUse" x1="256.9" y1="375.1" x2="425" y2="472.3">
<stop offset="0" stop-color="#18fdd2"/><stop offset="0.5" stop-color="#11bea6"/><stop offset="1" stop-color="#0e7e8a"/></linearGradient>
<linearGradient id="gT2" gradientUnits="userSpaceOnUse" x1="320" y1="0" x2="476" y2="0">
<stop offset="0" stop-color="#0b938a"/><stop offset="1" stop-color="#07404f"/></linearGradient>
<linearGradient id="gT1" gradientUnits="userSpaceOnUse" x1="335" y1="0" x2="420" y2="0">
<stop offset="0" stop-color="#0a8e86"/><stop offset="1" stop-color="#063f4e"/></linearGradient>
<linearGradient id="gS" gradientUnits="userSpaceOnUse" x1="415" y1="267" x2="510.4" y2="357">
<stop offset="0" stop-color="#0a8e88"/><stop offset="1" stop-color="#064050"/></linearGradient>
<linearGradient id="gA" gradientUnits="userSpaceOnUse" x1="391.6" y1="248.4" x2="522" y2="372">
<stop offset="0" stop-color="#159088"/><stop offset="1" stop-color="#053848"/></linearGradient>
<linearGradient id="gR1" x1="0" y1="0" x2="1" y2="0">
<stop offset="0" stop-color="#18fdd0"/><stop offset="1" stop-color="#0c7088"/></linearGradient>
<linearGradient id="gR2" x1="0" y1="0" x2="1" y2="0">
<stop offset="0" stop-color="#0a9490"/><stop offset="1" stop-color="#083c4c"/></linearGradient>
<clipPath id="cO"><circle cx="391.5" cy="305.5" r="140.5"/></clipPath>
</defs>
<rect x="576.8" y="248" width="56" height="57.3" fill="url(#gR1)"/>
<rect x="576.8" y="311.8" width="56" height="58" fill="url(#gR2)"/>
<g clip-path="url(#cO)">
<circle cx="391.5" cy="305.5" r="141" fill="url(#gT2)"/>
<circle cx="319" cy="301" r="115.7" fill="url(#gT1)"/>
<path d="M468.1,187.7 A140.5,140.5 0 0 1 525.4,347.9 C524.5,349.0 522.2,351.9 520.1,354.3 C518.0,356.7 516.0,359.2 512.8,362.2 C509.6,365.2 504.8,369.5 500.7,372.5 C496.6,375.5 492.6,378.2 488.5,380.4 C484.4,382.6 480.6,384.4 476.4,385.8 C472.1,387.2 467.4,388.2 463.0,389.1 C458.6,390.0 453.5,390.6 450.0,390.9 C446.5,391.2 445.2,391.2 442.0,391.1 C438.8,391.1 434.3,391.0 430.5,390.6 C426.7,390.2 422.8,389.7 419.0,388.9 C415.2,388.1 411.3,387.2 407.5,386.0 C403.7,384.8 399.8,383.3 396.0,381.4 C392.2,379.5 388.3,377.1 384.5,374.5 C380.7,371.9 376.3,368.8 373.0,365.9 C369.7,363.0 367.0,359.7 364.7,357.2 C362.4,354.7 361.0,353.0 359.3,350.7 C357.6,348.4 355.5,345.5 354.4,343.4 C353.3,341.3 352.9,338.8 352.6,337.9 L401.8,350.1 C403.2,349.7 406.9,349.1 410.3,347.9 C413.8,346.7 418.4,344.9 422.5,342.8 C426.6,340.7 430.8,338.2 434.6,335.5 C438.4,332.8 442.1,329.6 445.5,326.4 C448.9,323.2 452.4,319.5 455.2,316.1 C458.0,312.7 459.9,309.7 462.5,305.8 C465.1,301.9 468.4,297.3 470.5,293.0 C472.6,288.7 474.1,284.9 475.4,280.0 C476.7,275.1 477.5,268.5 478.1,263.3 C478.7,258.1 478.9,254.7 478.8,248.8 C478.6,242.8 478.0,234.9 477.1,227.9 C476.2,220.9 474.8,213.7 473.3,207.0 C471.8,200.3 469.0,190.9 468.1,187.7 Z" fill="url(#gS)"/>
</g>
<path d="M251.0,157.2 C253.1,157.6 259.0,158.4 263.4,159.7 C267.8,160.9 272.6,162.7 277.2,164.7 C281.8,166.7 286.4,169.1 291.0,171.6 C295.6,174.1 300.5,176.7 304.8,179.4 C309.1,182.1 312.6,183.8 316.7,187.7 C320.8,191.5 325.5,196.8 329.4,202.5 C333.2,208.2 337.1,215.5 339.8,221.6 C342.5,227.7 344.2,233.7 345.4,238.9 C346.6,244.1 346.6,248.3 346.8,252.7 C347.0,257.1 346.5,262.9 346.4,265.0 L346.3,290 L356,325 L352.6,337.9 C352.9,338.8 353.3,341.3 354.4,343.4 C355.5,345.5 357.6,348.4 359.3,350.7 C361.0,353.0 362.4,354.7 364.7,357.2 C367.0,359.7 369.7,363.0 373.0,365.9 C376.3,368.8 380.7,371.9 384.5,374.5 C388.3,377.1 392.2,379.5 396.0,381.4 C399.8,383.3 403.7,384.8 407.5,386.0 C411.3,387.2 415.2,388.1 419.0,388.9 C422.8,389.7 426.7,390.2 430.5,390.6 C434.3,391.0 438.8,391.1 442.0,391.1 C445.2,391.2 446.5,391.2 450.0,390.9 C453.5,390.6 458.6,390.0 463.0,389.1 C467.4,388.2 472.1,387.2 476.4,385.8 C480.6,384.4 484.4,382.6 488.5,380.4 C492.6,378.2 496.6,375.5 500.7,372.5 C504.8,369.5 509.6,365.2 512.8,362.2 C516.0,359.2 518.0,356.7 520.1,354.3 C522.2,351.9 524.5,349.0 525.4,347.9 A140.5,140.5 0 0 1 251,305.5 Z" fill="url(#gG)"/>
<path d="M346.4,265 A66.8,66.8 0 0 1 428.5,262 C429.1,263.4 430.8,267.1 432.0,270.4 C433.2,273.7 434.6,278.0 435.5,281.6 C436.4,285.2 436.9,288.6 437.2,292.0 C437.5,295.4 437.3,298.3 437.2,302.0 C437.1,305.7 437.2,310.2 436.4,314.3 C435.6,318.4 434.1,322.6 432.2,326.4 C430.3,330.2 427.7,334.3 424.9,337.3 C422.1,340.3 419.0,342.5 415.2,344.6 C411.4,346.7 406.3,348.9 401.8,350.1 C397.3,351.3 392.9,351.9 388.4,351.9 C383.9,351.9 378.6,351.0 375.0,350.3 C371.4,349.6 369.2,348.8 366.6,347.6 C364.0,346.5 361.6,345.0 359.3,343.4 C357.0,341.8 354.3,341.1 352.6,337.9 C350.9,334.7 349.9,328.9 349.0,324.0 C348.1,319.1 347.6,313.9 347.1,308.2 C346.7,302.5 346.4,297.2 346.3,290.0 C346.2,282.8 346.4,269.2 346.4,265.0 Z" fill="#ffffff"/>
<path d="M468.1,187.7 A140.5,140.5 0 0 1 525.4,347.9 C524.5,349.0 522.2,351.9 520.1,354.3 C518.0,356.7 516.0,359.2 512.8,362.2 C509.6,365.2 504.8,369.5 500.7,372.5 C496.6,375.5 492.6,378.2 488.5,380.4 C484.4,382.6 480.6,384.4 476.4,385.8 C472.1,387.2 467.4,388.2 463.0,389.1 C458.6,390.0 453.5,390.6 450.0,390.9 C446.5,391.2 445.2,391.2 442.0,391.1 C438.8,391.1 434.3,391.0 430.5,390.6 C426.7,390.2 422.8,389.7 419.0,388.9 C415.2,388.1 411.3,387.2 407.5,386.0 C403.7,384.8 399.8,383.3 396.0,381.4 C392.2,379.5 388.3,377.1 384.5,374.5 C380.7,371.9 376.3,368.8 373.0,365.9 C369.7,363.0 367.0,359.7 364.7,357.2 C362.4,354.7 361.0,353.0 359.3,350.7 C357.6,348.4 355.5,345.5 354.4,343.4 C353.3,341.3 352.9,338.8 352.6,337.9 C353.7,338.8 357.0,341.8 359.3,343.4 C361.6,345.0 364.0,346.5 366.6,347.6 C369.2,348.8 371.4,349.6 375.0,350.3 C378.6,351.0 383.9,351.9 388.4,351.9 C392.9,351.9 399.6,350.4 401.8,350.1 C403.2,349.7 406.9,349.1 410.3,347.9 C413.8,346.7 418.4,344.9 422.5,342.8 C426.6,340.7 430.8,338.2 434.6,335.5 C438.4,332.8 442.1,329.6 445.5,326.4 C448.9,323.2 452.4,319.5 455.2,316.1 C458.0,312.7 459.9,309.7 462.5,305.8 C465.1,301.9 468.4,297.3 470.5,293.0 C472.6,288.7 474.1,284.9 475.4,280.0 C476.7,275.1 477.5,268.5 478.1,263.3 C478.7,258.1 478.9,254.7 478.8,248.8 C478.6,242.8 478.0,234.9 477.1,227.9 C476.2,220.9 474.8,213.7 473.3,207.0 C471.8,200.3 469.0,190.9 468.1,187.7 Z" fill="none" stroke="#2f78e0" stroke-width="0.9"/>
<g fill="#2f78e0"><rect x="466.8" y="186.2" width="2.6" height="2.6"/><rect x="530.7" y="304.7" width="2.6" height="2.6"/><rect x="524.4" y="346.7" width="2.6" height="2.6"/><rect x="461.7" y="387.8" width="2.6" height="2.6"/><rect x="363.1" y="355.7" width="2.6" height="2.6"/><rect x="351.3" y="336.6" width="2.6" height="2.6"/><rect x="373.7" y="349.0" width="2.6" height="2.6"/><rect x="395.0" y="349.3" width="2.6" height="2.6"/><rect x="400.5" y="348.8" width="2.6" height="2.6"/><rect x="461.5" y="304.3" width="2.6" height="2.6"/></g>
<g>
<line x1="391.8" y1="248.8" x2="521.5" y2="371.5" stroke="#1c1c1c" stroke-width="5.8"/>
<line x1="391.8" y1="248.8" x2="521.5" y2="371.5" stroke="#ffffff" stroke-width="4.8"/>
<line x1="392.6" y1="249.6" x2="520.5" y2="370.5" stroke="url(#gA)" stroke-width="2.9"/>
<rect x="385.9" y="249.8" width="4.6" height="4.6" fill="#fff" stroke="#666" stroke-width="0.6" transform="rotate(-45 388.2 252.1)"/>
<rect x="386.9" y="250.8" width="2.6" height="2.6" fill="#1a8f8c" transform="rotate(-45 388.2 252.1)"/>
<circle cx="391.7" cy="248.9" r="2.4" fill="#0a0a0a"/>
<rect x="518.6" y="367.6" width="7" height="7" fill="#111" stroke="#fff" stroke-width="1" transform="rotate(43.5 522.1 371.1)"/>
<rect x="524" y="371" width="2.4" height="5" fill="#111" transform="rotate(43.5 522.1 371.1)"/>
<rect x="458.4" y="305.8" width="2.8" height="2.8" fill="#fff" stroke="#222" stroke-width="0.5" transform="rotate(45 459.8 307.2)"/>
</g>
</svg>
<!-- TYPE TOOL GLYPH -->
<div class="abs tx" style="left:6.6px;top:92.6px;color:#e0e0e0;font-family:'Liberation Serif',serif;font-size:12.5px;line-height:13px;">T</div>
</body>
</html>
